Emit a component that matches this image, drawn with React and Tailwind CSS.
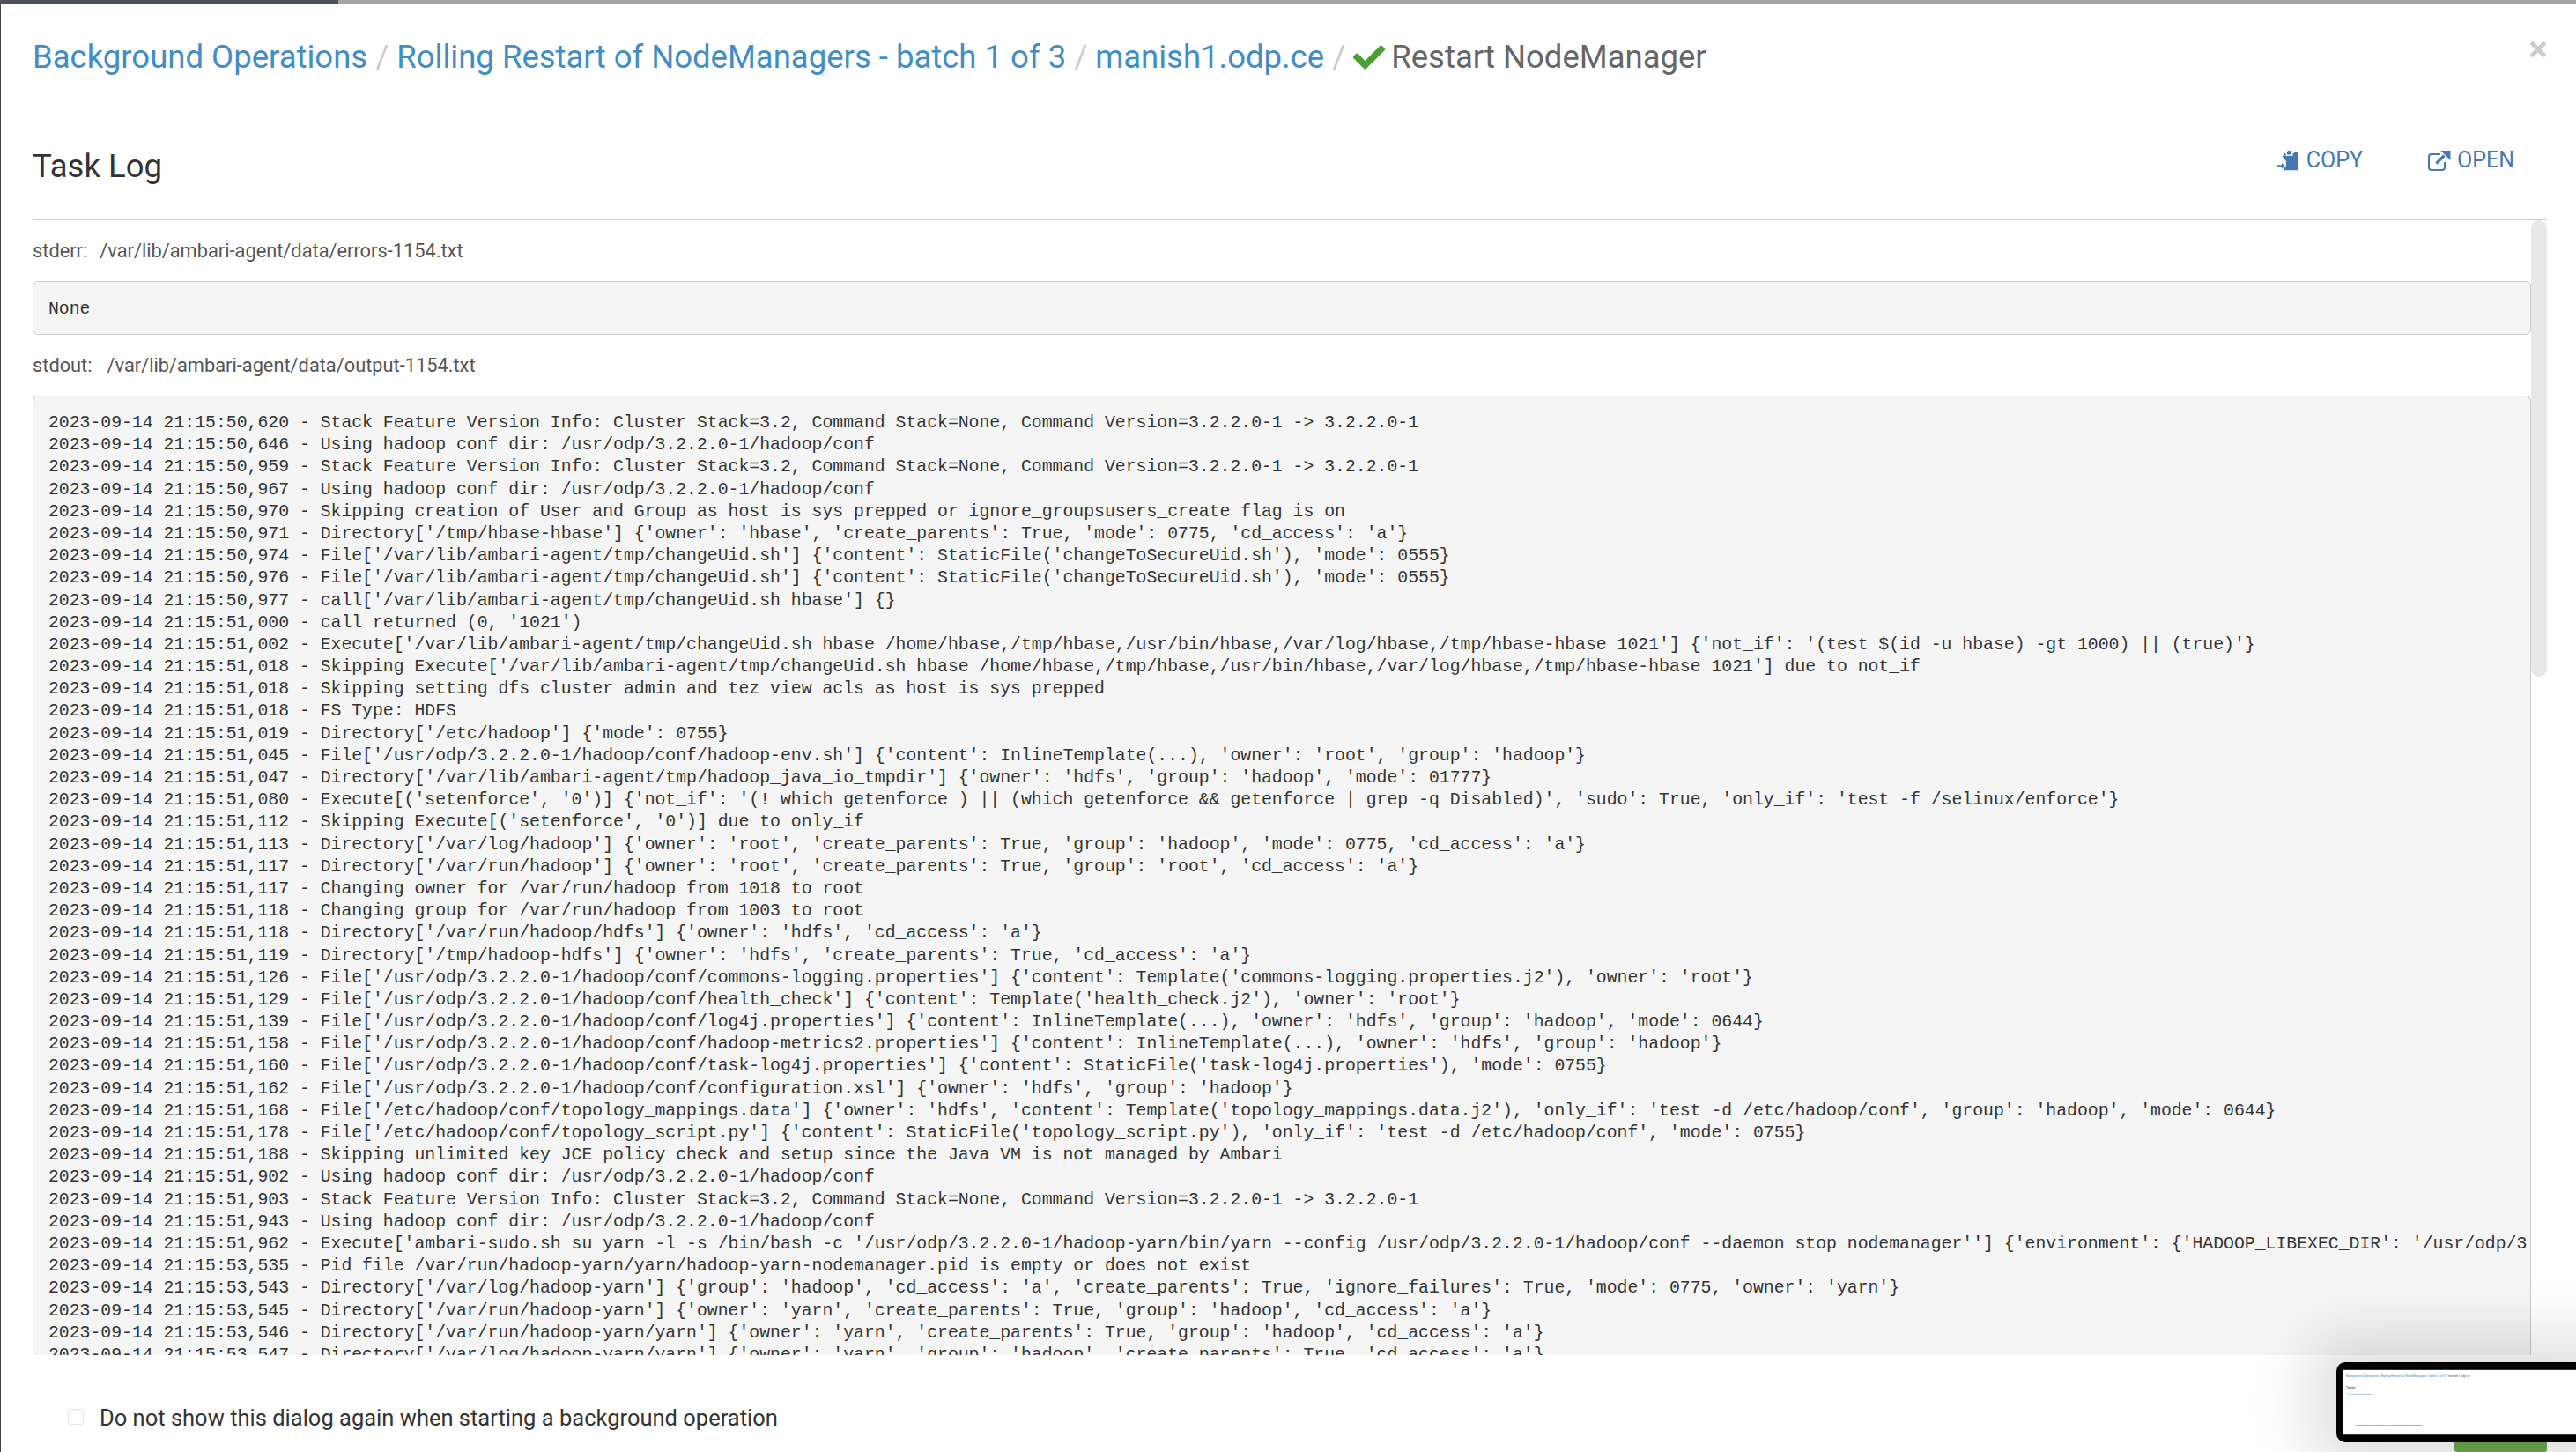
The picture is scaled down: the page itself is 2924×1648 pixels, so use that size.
import React from 'react';
import { FaCheck, FaTimes } from 'react-icons/fa';

const roboto = 'font-["Roboto",sans-serif]';
const ODP = '/usr/odp/3.2.2.0-1/hadoop/conf';
const CHANGE_UID = "/var/lib/ambari-agent/tmp/changeUid.sh hbase /home/hbase,/tmp/hbase,/usr/bin/hbase,/var/log/hbase,/tmp/hbase-hbase 1021";
const STACK_INFO = 'Stack Feature Version Info: Cluster Stack=3.2, Command Stack=None, Command Version=3.2.2.0-1 -> 3.2.2.0-1';
const USING_CONF = `Using hadoop conf dir: ${ODP}`;

const logLines = [
  ['50,620', STACK_INFO],
  ['50,646', USING_CONF],
  ['50,959', STACK_INFO],
  ['50,967', USING_CONF],
  ['50,970', 'Skipping creation of User and Group as host is sys prepped or ignore_groupsusers_create flag is on'],
  ['50,971', "Directory['/tmp/hbase-hbase'] {'owner': 'hbase', 'create_parents': True, 'mode': 0775, 'cd_access': 'a'}"],
  ['50,974', "File['/var/lib/ambari-agent/tmp/changeUid.sh'] {'content': StaticFile('changeToSecureUid.sh'), 'mode': 0555}"],
  ['50,976', "File['/var/lib/ambari-agent/tmp/changeUid.sh'] {'content': StaticFile('changeToSecureUid.sh'), 'mode': 0555}"],
  ['50,977', "call['/var/lib/ambari-agent/tmp/changeUid.sh hbase'] {}"],
  ['51,000', "call returned (0, '1021')"],
  ['51,002', `Execute['${CHANGE_UID}'] {'not_if': '(test $(id -u hbase) -gt 1000) || (true)'}`],
  ['51,018', `Skipping Execute['${CHANGE_UID}'] due to not_if`],
  ['51,018', 'Skipping setting dfs cluster admin and tez view acls as host is sys prepped'],
  ['51,018', 'FS Type: HDFS'],
  ['51,019', "Directory['/etc/hadoop'] {'mode': 0755}"],
  ['51,045', `File['${ODP}/hadoop-env.sh'] {'content': InlineTemplate(...), 'owner': 'root', 'group': 'hadoop'}`],
  ['51,047', "Directory['/var/lib/ambari-agent/tmp/hadoop_java_io_tmpdir'] {'owner': 'hdfs', 'group': 'hadoop', 'mode': 01777}"],
  ['51,080', "Execute[('setenforce', '0')] {'not_if': '(! which getenforce ) || (which getenforce && getenforce | grep -q Disabled)', 'sudo': True, 'only_if': 'test -f /selinux/enforce'}"],
  ['51,112', "Skipping Execute[('setenforce', '0')] due to only_if"],
  ['51,113', "Directory['/var/log/hadoop'] {'owner': 'root', 'create_parents': True, 'group': 'hadoop', 'mode': 0775, 'cd_access': 'a'}"],
  ['51,117', "Directory['/var/run/hadoop'] {'owner': 'root', 'create_parents': True, 'group': 'root', 'cd_access': 'a'}"],
  ['51,117', 'Changing owner for /var/run/hadoop from 1018 to root'],
  ['51,118', 'Changing group for /var/run/hadoop from 1003 to root'],
  ['51,118', "Directory['/var/run/hadoop/hdfs'] {'owner': 'hdfs', 'cd_access': 'a'}"],
  ['51,119', "Directory['/tmp/hadoop-hdfs'] {'owner': 'hdfs', 'create_parents': True, 'cd_access': 'a'}"],
  ['51,126', `File['${ODP}/commons-logging.properties'] {'content': Template('commons-logging.properties.j2'), 'owner': 'root'}`],
  ['51,129', `File['${ODP}/health_check'] {'content': Template('health_check.j2'), 'owner': 'root'}`],
  ['51,139', `File['${ODP}/log4j.properties'] {'content': InlineTemplate(...), 'owner': 'hdfs', 'group': 'hadoop', 'mode': 0644}`],
  ['51,158', `File['${ODP}/hadoop-metrics2.properties'] {'content': InlineTemplate(...), 'owner': 'hdfs', 'group': 'hadoop'}`],
  ['51,160', `File['${ODP}/task-log4j.properties'] {'content': StaticFile('task-log4j.properties'), 'mode': 0755}`],
  ['51,162', `File['${ODP}/configuration.xsl'] {'owner': 'hdfs', 'group': 'hadoop'}`],
  ['51,168', "File['/etc/hadoop/conf/topology_mappings.data'] {'owner': 'hdfs', 'content': Template('topology_mappings.data.j2'), 'only_if': 'test -d /etc/hadoop/conf', 'group': 'hadoop', 'mode': 0644}"],
  ['51,178', "File['/etc/hadoop/conf/topology_script.py'] {'content': StaticFile('topology_script.py'), 'only_if': 'test -d /etc/hadoop/conf', 'mode': 0755}"],
  ['51,188', 'Skipping unlimited key JCE policy check and setup since the Java VM is not managed by Ambari'],
  ['51,902', USING_CONF],
  ['51,903', STACK_INFO],
  ['51,943', USING_CONF],
  ['51,962', `Execute['ambari-sudo.sh su yarn -l -s /bin/bash -c '/usr/odp/3.2.2.0-1/hadoop-yarn/bin/yarn --config ${ODP} --daemon stop nodemanager''] {'environment': {'HADOOP_LIBEXEC_DIR': '/usr/odp/3.2.2.0-1/hadoop/libexec'}}`],
  ['53,535', 'Pid file /var/run/hadoop-yarn/yarn/hadoop-yarn-nodemanager.pid is empty or does not exist'],
  ['53,543', "Directory['/var/log/hadoop-yarn'] {'group': 'hadoop', 'cd_access': 'a', 'create_parents': True, 'ignore_failures': True, 'mode': 0775, 'owner': 'yarn'}"],
  ['53,545', "Directory['/var/run/hadoop-yarn'] {'owner': 'yarn', 'create_parents': True, 'group': 'hadoop', 'cd_access': 'a'}"],
  ['53,546', "Directory['/var/run/hadoop-yarn/yarn'] {'owner': 'yarn', 'create_parents': True, 'group': 'hadoop', 'cd_access': 'a'}"],
  ['53,547', "Directory['/var/log/hadoop-yarn/yarn'] {'owner': 'yarn', 'group': 'hadoop', 'create_parents': True, 'cd_access': 'a'}"],
];

const CopyIcon = () => (
  <svg width="24" height="24" viewBox="0 0 24 24" fill="#4479b3">
    <path d="M8 4h3V2.600C11 1.500 12 1 13.500 1S16 1.500 16 2.600V4h3V3h3c1 0 1.500.6 1.500 1.500V22c0 .8-.5 1.300-1.300 1.300H6.500l3.500-5.300V13L5.500 7.500 7 6.500V5c0-.6.400-1 1-1z" />
    <path d="M9.500 3.200h1.500v2.300h5V3.200h1.500v3.800h-8z" fill="#fff" />
    <path d="M0 17.300h5V14.800l3.500 3.500L5 21.800v-2.500H0z" />
  </svg>
);

const OpenIcon = () => (
  <svg width="26" height="24" viewBox="0 0 26 24" fill="none">
    <path d="M14 5H4a3 3 0 0 0-3 3v12a3 3 0 0 0 3 3h12a3 3 0 0 0 3-3v-6" stroke="#4479b3" strokeWidth="2" />
    <path d="M9.500 15.500 18.500 6.500" stroke="#4479b3" strokeWidth="3.200" />
    <path d="M14.500 1H25.500V12z" fill="#4479b3" />
  </svg>
);

const Separator = () => <span className="text-[#ccc] mx-[9px]">/</span>;

const Thumbnail = () => (
  <div className="absolute left-[2652px] top-[1546px] w-[300px] h-[91px] rounded-l-[10px] bg-black pl-2 py-2 shadow-[0_0_70px_30px_rgba(0,0,0,0.13)]">
    <div className={`${roboto} h-[75px] bg-white border-y border-[#333] pl-[3px] overflow-hidden whitespace-nowrap`}>
      <div className="mt-[5px] text-[3.500px] leading-[5px] text-[#428bca]">
        Background Operations / Rolling Restart of NodeManagers - batch 1 of 3 / <span className="text-[#555]">manish1.odp.ce</span>
      </div>
      <div className="mt-[7px] text-[4px] leading-[5px] text-[#333]">Tasks</div>
      <div className="mt-[3px] ml-[1px] text-[2.500px] leading-[5px] text-[#428bca]">✔ Restart NodeManager</div>
      <div className="mt-[30px] ml-[11px] text-[2.500px] leading-[5px] text-[#333]">Do not show this dialog again when starting a background operation</div>
    </div>
  </div>
);

export default function App() {
  return (
    <div className={`${roboto} relative h-[1648px] w-[2924px] overflow-hidden bg-white`}>
      <div className="flex h-1">
        <div className="w-[384px] bg-[#4b505c]" />
        <div className="flex-1 bg-[#a3a3a3]" />
      </div>

      <div className="flex h-[1644px] flex-col border-l border-[#444]">
        <div className="flex h-[112px] items-start justify-between pl-[36px] pr-[30px]">
          <h1 className="mt-[39px] flex items-center text-[36.500px] leading-[44px] text-[#428dc4] whitespace-nowrap">
            <span>Background Operations</span>
            <Separator />
            <span>Rolling Restart of NodeManagers - batch 1 of 3</span>
            <Separator />
            <span>manish1.odp.ce</span>
            <Separator />
            <FaCheck className="mr-[7px] text-[36px] text-[#4a9f30]" />
            <span className="text-[#666]">Restart NodeManager</span>
          </h1>
          <FaTimes className="mt-[39px] text-[26px] text-[#ccc]" />
        </div>

        <div className="mx-[36px] mr-[33px] flex h-[134px] items-center justify-between border-b border-[#ccc] pt-[12px]">
          <h2 className="text-[36.500px] leading-[40px] text-[#333]">Task Log</h2>
          <div className="mr-[37px] flex items-center gap-[74px] pb-[13px] text-[25px] leading-[30px] text-[#4479b3]">
            <span className="flex items-center gap-[9px]"><CopyIcon />COPY</span>
            <span className="flex items-center gap-[7px]"><OpenIcon />OPEN</span>
          </div>
        </div>

        <div className="flex min-h-0 flex-1 pl-[36px] pr-[33px]">
          <div className="min-w-0 flex-1 overflow-hidden text-[21.800px] text-[#555]">
            <div className="mt-[19px] h-[32px] leading-[32px]">stderr:<span className="ml-[14px]">/var/lib/ambari-agent/data/errors-1154.txt</span></div>
            <pre className="mt-[18px] h-[61px] rounded-[6px] border border-[#ccc] bg-[#f5f5f5] pl-[17px] font-['Liberation_Mono',monospace] text-[19.800px] leading-[62px] text-[#333]">None</pre>
            <div className="mt-[19px] h-[32px] leading-[32px]">stdout:<span className="ml-[17px]">/var/lib/ambari-agent/data/output-1154.txt</span></div>
            <pre className="mt-[18px] overflow-hidden rounded-t-[6px] border border-b-0 border-[#ccc] bg-[#f5f5f5] pl-[17px] pt-[18px] font-['Liberation_Mono',monospace] text-[19.800px] leading-[25.190px] text-[#333]">
              {logLines.map(([time, text], i) => (
                <div key={i}>{`2023-09-14 21:15:${time} - ${text}`}</div>
              ))}
            </pre>
          </div>
          <div className="w-[18px] shrink-0">
            <div className="h-[518px] rounded-[9px] bg-[#e8e8e8]" />
          </div>
        </div>

        <div className="flex h-[110px] shrink-0 items-start pl-[76px] pt-[56px]">
          <span className="mt-[5px] h-[18px] w-[18px] rounded-[3px] border border-[#e4e4e4]" />
          <span className="ml-[18px] text-[25.500px] leading-[30px] text-[#333]">Do not show this dialog again when starting a background operation</span>
        </div>
      </div>

      <div className="absolute left-[2786px] top-[1630px] h-[18px] w-[105px] rounded-[3px] bg-[#6aa84f]" />
      <Thumbnail />
    </div>
  );
}
